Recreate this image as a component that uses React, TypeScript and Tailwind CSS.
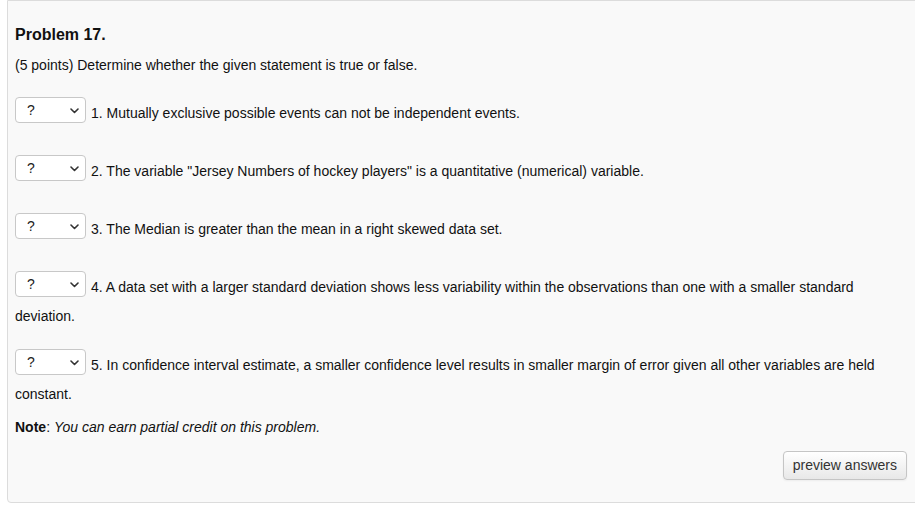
import React from "react";

const items: { n: number; text: string }[] = [
  { n: 1, text: "Mutually exclusive possible events can not be independent events." },
  { n: 2, text: 'The variable "Jersey Numbers of hockey players" is a quantitative (numerical) variable.' },
  { n: 3, text: "The Median is greater than the mean in a right skewed data set." },
  {
    n: 4,
    text: "A data set with a larger standard deviation shows less variability within the observations than one with a smaller standard deviation.",
  },
  {
    n: 5,
    text: "In confidence interval estimate, a smaller confidence level results in smaller margin of error given all other variables are held constant.",
  },
];

function FakeSelect() {
  return (
    <span className="inline-flex align-middle items-center justify-between w-[71px] h-[26px] mb-[9px] mr-[5px] bg-white border border-[#c8c8c8] rounded-[4px] pl-[11px] pr-[6px] text-[14px] text-[#222]">
      <span className="leading-none">?</span>
      <svg width="9" height="6" viewBox="0 0 9 6" className="mt-[1px]">
        <path d="M1 1 L4.5 4.5 L8 1" fill="none" stroke="#333" strokeWidth="1.6" strokeLinecap="round" strokeLinejoin="round" />
      </svg>
    </span>
  );
}

export default function App() {
  return (
    <div
      className="w-[915px] h-[505px] overflow-hidden bg-white"
      style={{ fontFamily: '"Liberation Sans", Arial, Helvetica, sans-serif' }}
    >
      <div className="ml-[7px] w-[930px] h-[503px] box-border border border-[#dcdcdc] rounded-bl-[4px] bg-[#f9f9f9] pl-[7px] pt-[24px] text-[#111]">
        <div className="w-[893px]">
          <h3 className="text-[16px] leading-[20px] font-bold text-[#111]">Problem 17.</h3>
          <p className="mt-[10px] text-[14px] leading-[20px]">
            (5 points) Determine whether the given statement is true or false.
          </p>
          {items.map((it, i) => (
            <p key={it.n} className={`text-[14px] leading-[20px] ${i === 0 ? "mt-[22px]" : "mt-[23px]"}`}>
              <FakeSelect />
              {it.n}. {it.text}
            </p>
          ))}
          <p className="mt-[13px] text-[14px] leading-[20px]">
            <b>Note</b>: <i>You can earn partial credit on this problem.</i>
          </p>
          <div className="flex justify-end mt-[14px] pr-[1px]">
            <button className="h-[29px] px-[9px] text-[14px] text-[#333] border border-[#c5c5c5] rounded-[4px] bg-gradient-to-b from-white to-[#e8e8e8] shadow-[0_1px_2px_rgba(0,0,0,0.05)]">
              preview answers
            </button>
          </div>
        </div>
      </div>
    </div>
  );
}
